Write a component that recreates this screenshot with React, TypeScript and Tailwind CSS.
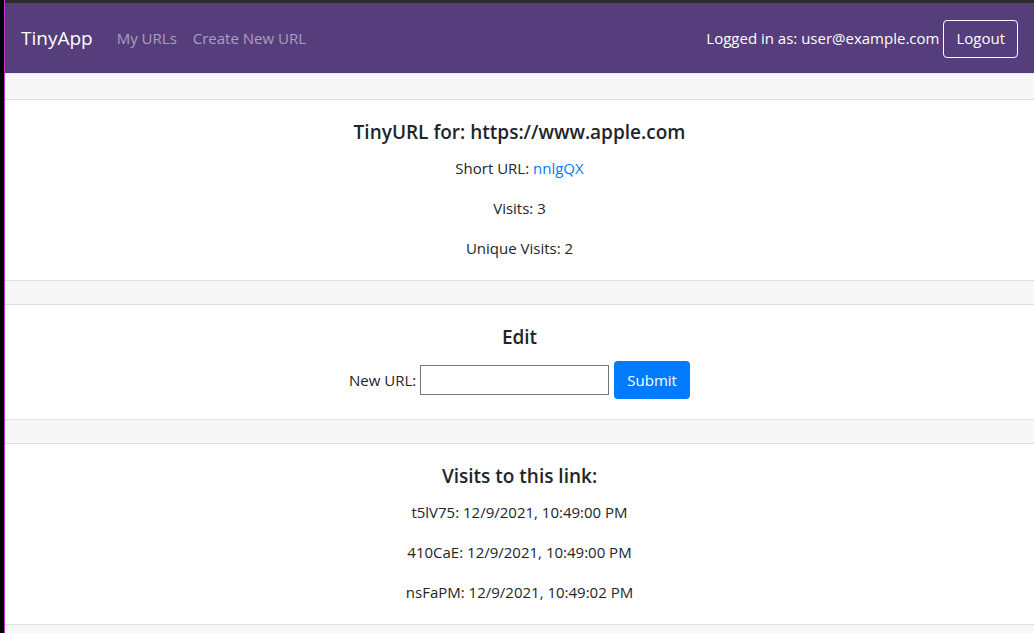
export default function App() {
  const visits = [
    { id: "t5lV75", time: "12/9/2021, 10:49:00 PM" },
    { id: "410CaE", time: "12/9/2021, 10:49:00 PM" },
    { id: "nsFaPM", time: "12/9/2021, 10:49:02 PM" },
  ];

  return (
    <div className="flex h-[633px] w-[1034px] overflow-hidden bg-black font-['Open_Sans',sans-serif] text-[15px] text-[#212529]">
      <div className="w-[4px] shrink-0 bg-black" />
      <div className="flex min-w-0 flex-1 flex-col border-l border-[#c03cd0] bg-white">
        <div className="h-[3px] shrink-0 bg-[#2b2b2b]" />
        <nav className="flex h-[70px] shrink-0 items-center justify-between bg-[#563d7c] px-4 pt-px">
          <div className="flex items-center">
            <a className="mr-4 text-[19px] text-white">TinyApp</a>
            <a className="px-2 text-[rgba(255,255,255,0.5)]">My URLs</a>
            <a className="px-2 text-[rgba(255,255,255,0.5)]">Create New URL</a>
          </div>
          <div className="flex items-center gap-1">
            <span className="text-white">Logged in as: user@example.com</span>
            <button className="h-[38px] rounded border border-white px-3 text-white">
              Logout
            </button>
          </div>
        </nav>

        <Card first>
          <h5 className="mb-3 text-[19px] leading-6 font-semibold">
            TinyURL for: https://www.apple.com
          </h5>
          <p className="leading-6">
            Short URL: <a className="text-[#007bff]">nnlgQX</a>
          </p>
          <p className="mt-4 leading-6">Visits: 3</p>
          <p className="mt-4 leading-6">Unique Visits: 2</p>
        </Card>

        <Card>
          <h5 className="mb-3 text-[19px] leading-6 font-semibold">Edit</h5>
          <form className="flex items-center justify-center">
            <label className="mr-1">New URL:</label>
            <input
              type="text"
              className="h-[30px] w-[189px] border border-[#767676] px-1 outline-none"
            />
            <button
              type="button"
              className="ml-[5px] h-[38px] rounded bg-[#007bff] px-[13px] text-white"
            >
              Submit
            </button>
          </form>
        </Card>

        <Card>
          <h5 className="mb-3 text-[19px] leading-6 font-semibold">
            Visits to this link:
          </h5>
          {visits.map((v, i) => (
            <p key={v.id} className={`leading-6 ${i > 0 ? "mt-4" : ""}`}>
              {v.id}: {v.time}
            </p>
          ))}
        </Card>

        <div className="h-[24px] shrink-0 border-t border-[#dfdfdf] bg-[#f7f7f7]" />
      </div>
    </div>
  );
}

function Card({
  children,
  first = false,
}: {
  children: React.ReactNode;
  first?: boolean;
}) {
  return (
    <section className="shrink-0">
      <div
        className={`${
          first ? "h-[27px] border-t-[#ececec]" : "h-[25px] border-t-[#dfdfdf]"
        } border-y border-b-[#dfdfdf] bg-[#f7f7f7]`}
      />
      <div className="p-5 text-center">{children}</div>
    </section>
  );
}
